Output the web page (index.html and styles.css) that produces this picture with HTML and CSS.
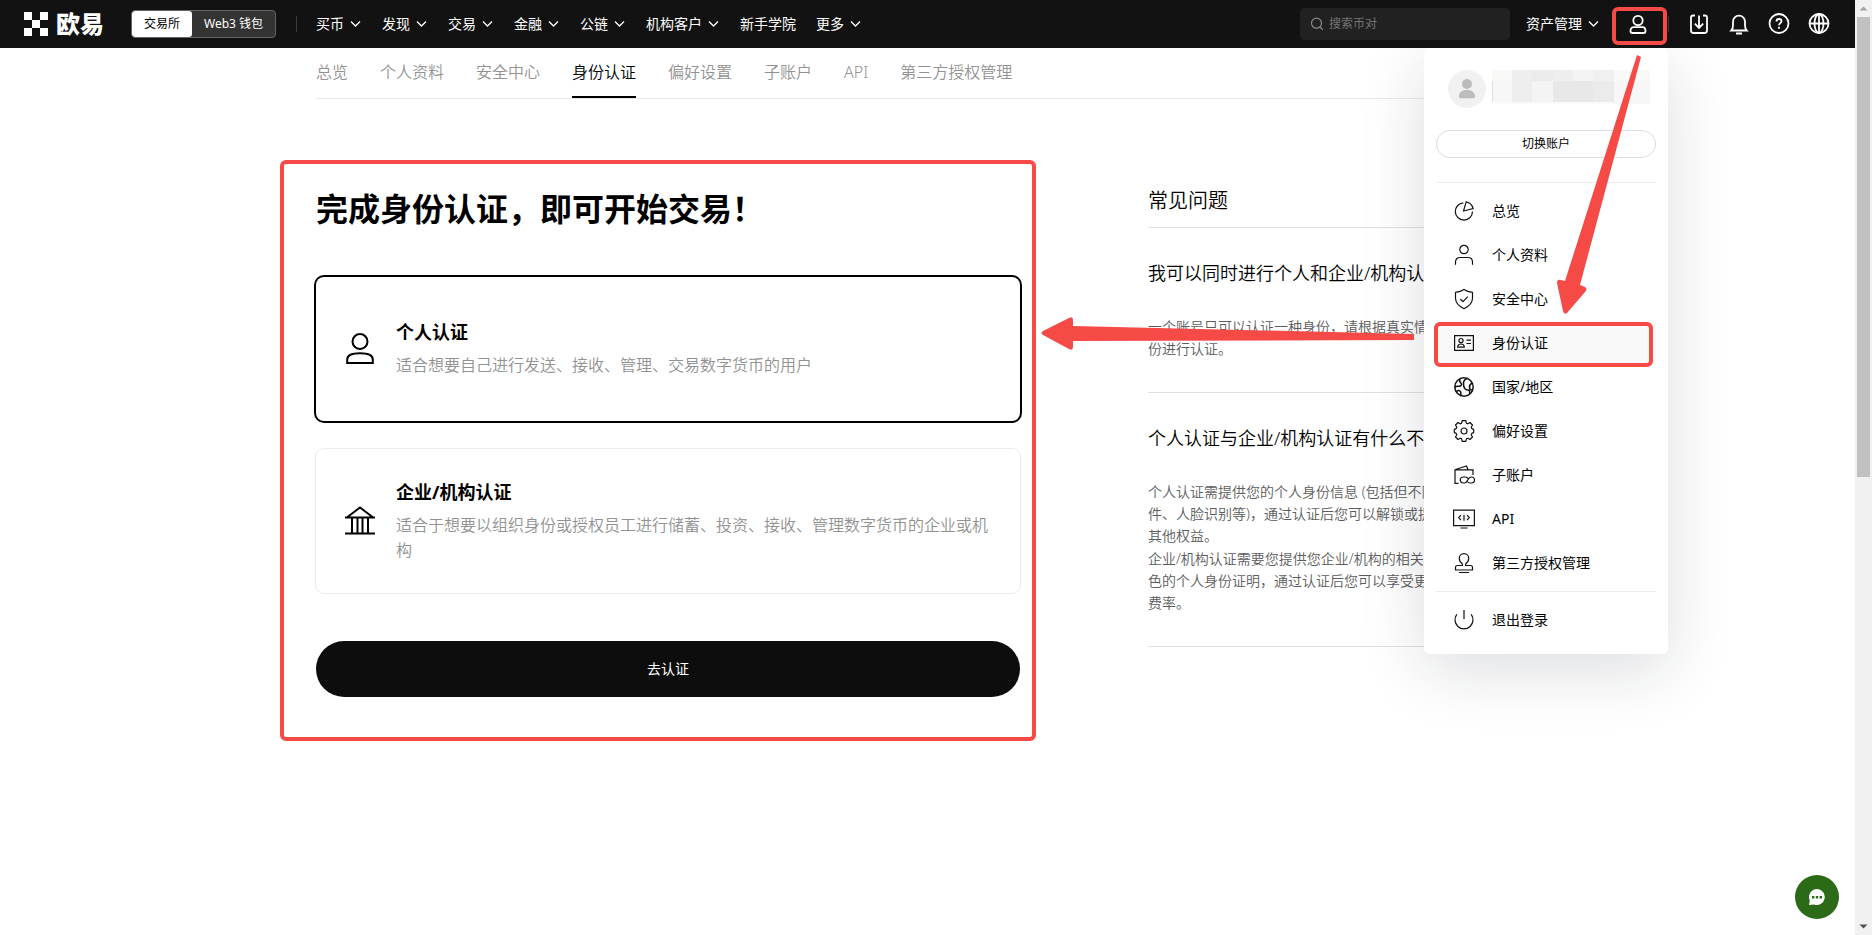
FILE: index.html
```html
<!DOCTYPE html>
<html lang="zh-CN">
<head>
<meta charset="utf-8">
<title>身份认证</title>
<link rel="stylesheet" href="styles.css">
</head>
<body>
<svg class="defs" aria-hidden="true">
  <symbol id="chev" viewBox="0 0 12 12"><path d="M1 3.500 5.500 8 10 3.500" fill="none" stroke="currentColor" stroke-width="1.300"/></symbol>
</svg>
<header class="topbar">
  <a class="logo" href="#">
    <svg class="logo-mark" viewBox="0 0 24 24" aria-hidden="true"><path fill="#fff" d="M0 0h8v8H0zM16 0h8v8h-8zM8 8h8v8H8zM0 16h8v8H0zM16 16h8v8h-8z"/></svg>
    <span class="logo-text">欧易</span>
  </a>
  <div class="switch">
    <button class="switch-item switch-on" type="button">交易所</button>
    <button class="switch-item" type="button">Web3 钱包</button>
  </div>
  <span class="bar-divider"></span>
  <nav class="mainnav">
    <a href="#">买币<svg class="chev"><use href="#chev"/></svg></a>
    <a href="#">发现<svg class="chev"><use href="#chev"/></svg></a>
    <a href="#">交易<svg class="chev"><use href="#chev"/></svg></a>
    <a href="#">金融<svg class="chev"><use href="#chev"/></svg></a>
    <a href="#">公链<svg class="chev"><use href="#chev"/></svg></a>
    <a href="#">机构客户<svg class="chev"><use href="#chev"/></svg></a>
    <a href="#">新手学院</a>
    <a href="#">更多<svg class="chev"><use href="#chev"/></svg></a>
  </nav>
  <label class="search">
    <svg class="search-icon" viewBox="0 0 14 14" aria-hidden="true"><circle cx="6.500" cy="6.200" r="5" /><path d="m10.200 10 2.500 2.800"/></svg>
    <input type="text" placeholder="搜索币对" aria-label="搜索币对">
  </label>
  <nav class="mainnav assets"><a href="#">资产管理<svg class="chev"><use href="#chev"/></svg></a></nav>
  <div class="account">
    <button class="icon-btn marked" type="button" aria-label="账户">
      <svg viewBox="0 0 24 24"><circle cx="12" cy="8.500" r="4.700"/><path d="M7.500 15.200h9c2 0 3 1.800 3 3.800 0 1.200-.6 2-1.800 2H6.300c-1.200 0-1.800-.8-1.800-2 0-2 1-3.800 3-3.800z"/></svg>
    </button>
    <aside class="menu">
      <div class="profile">
        <svg class="avatar" viewBox="0 0 38 38" aria-hidden="true"><circle cx="19" cy="19" r="19" fill="#f1f1f1"/><circle cx="19" cy="14" r="5" fill="#bcbcbc"/><path d="M11 26.500c0-4 3-6.500 8-6.500s8 2.500 8 6.500c0 1.200-.6 1.700-1.800 1.700H12.800c-1.200 0-1.800-.5-1.800-1.700z" fill="#bcbcbc"/></svg>
        <svg class="mosaic" viewBox="0 0 158 34" aria-hidden="true">
          <path fill="#f9f9f8" d="M0 0h20v11H0zM122 0h36v11h-36z"/><path fill="#eeeeee" d="M20 0h20v32H20zM61 0h20v11H61z"/><path fill="#ebebeb" d="M40 0h21v11H40z"/><path fill="#f4f4f4" d="M81 0h20v11H81zM40 11h21v21H40z"/><path fill="#f0f0f0" d="M101 0h21v11h-21z"/><path fill="#f7f7f7" d="M0 11h20v21H0zM122 11h36v23h-36z"/><path fill="#e8e8e8" d="M61 11h40v21H61z"/><path fill="#ebebeb" d="M101 11h21v21h-21z"/><path fill="#fafafa" d="M0 32h122v2H0z"/><path fill="#ddd" d="M0 11h1v21H0z"/>
        </svg>
      </div>
      <button class="swap" type="button">切换账户</button>
      <ul class="menu-list">
        <li><a href="#"><svg viewBox="0 0 20 20"><path d="M9.300 1.900A8.600 8.600 0 1 0 18.500 10.500"/><path d="M12.200.8 9.500 10l9.600-2.500A9 9 0 0 0 12.200.8z"/></svg>总览</a></li>
        <li><a href="#"><svg viewBox="0 0 20 20"><circle cx="10" cy="4.500" r="4.200"/><path d="M1.500 19.800v-2.500c0-3 1.700-4.800 4.500-4.800h8c2.800 0 4.500 1.800 4.500 4.800v2.500"/></svg>个人资料</a></li>
        <li><a href="#"><svg viewBox="0 0 20 20"><path d="M10 .5c2.800 2 5.500 2.500 8.500 2.800v6c0 4.500-3.500 8-8.500 10.400-5-2.400-8.500-5.900-8.500-10.400v-6C4.500 3 7.200 2.500 10 .5z"/><path d="m6.300 10 2.700 2.600 4.800-5"/></svg>安全中心</a></li>
        <li><a class="current marked" href="#"><svg viewBox="0 0 20 20"><path d="M.6 2.600h18.800v14.800H.6z"/><circle cx="7" cy="7.600" r="2.100"/><path d="M3.700 14.200c0-2 1-3.200 3.300-3.200s3.300 1.200 3.300 3.200zM12.500 7.200h4.500M12.500 10.500h4.500"/></svg>身份认证</a></li>
        <li><a href="#"><svg viewBox="0 0 20 20" class="bold"><circle cx="10" cy="10" r="9.200"/><path d="M5.800 2c-.5 2 .2 3.500 1.500 4.500 1 1-.5 2.600-2 2.800-1.500.2-2.900-.2-4.500.7M2 14.800c2.500-1.800 4.600-1.500 4.800.6.100 1-.3 2.300.5 3.600M13.500 1.500c-2.700.7-3.800 2.300-4 4.500-.2 2.400.2 4.500 1.700 6 1.500 1.500 3.300.4 4.100 1.500.6 1 .2 2.500.5 3.500M18.300 6c-2 1-3 2.500-2.800 4.500 0 1.500 1.200 2.500 2.700 2.900"/></svg>国家/地区</a></li>
        <li><a href="#"><svg viewBox="0 0 20 20"><circle cx="10" cy="10" r="3"/><path d="M8.200.7h3.600l.6 2.500 1.400.6 2.200-1.300 2.500 2.500-1.300 2.200.6 1.400 1.900.8v3.200l-1.900.8-.6 1.400 1.300 2.200-2.500 2.500-2.200-1.300-1.400.6-.6 2.500H8.200l-.6-2.500-1.400-.6L4 19.500 1.500 17l1.300-2.200-.6-1.400-1.900-.8V9.400l1.900-.8.600-1.400L1.500 5 4 2.500l2.200 1.300 1.400-.6z" transform="translate(0 -1)" stroke-linejoin="round"/></svg>偏好设置</a></li>
        <li><a href="#"><svg viewBox="0 0 20 20"><path d="M4.500 18.300H1V4.800h18V10M1.500 4.500l11-3.500 1.500 3.500"/><path d="M14.500 14c-.8-1.300-1.800-2-3.500-2H9.500c-1.900 0-3.200 1.300-3.200 3s1.300 3 3.200 3h1c3.300 0 3.200-6 6.500-6h.3c1.900 0 3.200 1.300 3.200 3s-1.300 3-3.200 3H16c-1.200 0-2.200-.5-3-1.500"/></svg>子账户</a></li>
        <li><a href="#"><svg viewBox="0 0 20 20"><path d="M-.4 1.200h20.800v15.400H-.4zM6.500 19h7M7 6.200 4.700 8.600 7 11M13 6.200l2.300 2.400L13 11M10 5.800v6"/></svg>API</a></li>
        <li><a href="#"><svg viewBox="0 0 20 20"><path d="M8.300 10.800C6 9.300 5.300 7.300 5.300 5.300a4.700 4.700 0 0 1 9.400 0c0 2-.7 4-3 5.500v1.700h4.800c1.300 0 2 .7 2 2V17h-17v-2.500c0-1.300.7-2 2-2h4.800zM5 19.500h10"/></svg>第三方授权管理</a></li>
      </ul>
      <ul class="menu-list">
        <li><a href="#"><svg viewBox="0 0 20 20"><path d="M10 0v9M2.800 4.400a9 9 0 1 0 14.400 0"/></svg>退出登录</a></li>
      </ul>
      <svg class="arrows" viewBox="1424 48 244 606" aria-hidden="true">
        <path d="M1414 334v6L1073 341v6q0 4-4 2l-26-14q-3-2 0-4l26-13q4-2 4 2v6z"/>
        <path d="M1637 55l4 2-61 228 5 2q3 2 0 5l-18 21q-3 2-4-2l-6-28q0-4 4-3l4 1z"/>
      </svg>
    </aside>
  </div>
  <span class="bar-divider tools-divider"></span>
  <div class="tools">
    <button class="icon-btn" type="button" aria-label="下载"><svg viewBox="0 0 24 24"><path d="M8 3.500H6.200C4.600 3.500 4 4 4 5.500v13C4 20.300 4.700 21 6.500 21h11c1.800 0 2.500-.7 2.500-2.500v-13c0-1.500-.6-2-2.200-2H16M12 3.500V16M7.800 11.700 12 16l4.200-4.300"/></svg></button>
    <button class="icon-btn" type="button" aria-label="通知"><svg viewBox="0 0 24 24"><path d="M4.200 18.500C5.500 17 6 15.500 6 13.500V9.700a6 6 0 0 1 12 0v3.800c0 2 .5 3.500 1.800 5zM9 21.500h6"/></svg></button>
    <button class="icon-btn" type="button" aria-label="帮助"><svg viewBox="0 0 24 24"><circle cx="12" cy="11.500" r="9.500"/><path d="M9.500 9.500C9.500 8 10.500 7 12 7s2.500 1 2.500 2.300c0 1.800-2.500 2-2.500 4M12 14.800v2"/></svg></button>
    <button class="icon-btn" type="button" aria-label="语言"><svg viewBox="0 0 24 24"><circle cx="12" cy="11.500" r="9.500"/><ellipse cx="12" cy="11.500" rx="4.500" ry="9.500"/><path d="M2.500 11.500h19M12 2v19"/></svg></button>
  </div>
</header>

<main class="page">
  <nav class="tabs">
    <a href="#">总览</a><a href="#">个人资料</a><a href="#">安全中心</a><a class="active" href="#">身份认证</a><a href="#">偏好设置</a><a href="#">子账户</a><a href="#">API</a><a href="#">第三方授权管理</a>
  </nav>
  <div class="columns">
    <section class="verify marked">
      <h1>完成身份认证，即可开始交易！</h1>
      <div class="cards">
        <button class="card selected" type="button">
          <svg class="card-icon" viewBox="0 0 32 32" aria-hidden="true"><circle cx="16" cy="8.500" r="7.500"/><path d="M3.200 30V26.500c0-4 4-6.300 12.800-6.300s12.800 2.300 12.800 6.300V30z"/></svg>
          <span class="card-body"><strong>个人认证</strong><span>适合想要自己进行发送、接收、管理、交易数字货币的用户</span></span>
        </button>
        <button class="card" type="button">
          <svg class="card-icon" viewBox="0 0 32 32" aria-hidden="true"><path d="M3.500 12 16 2.500 28.500 12M1 12.500h30M1 28.500h30M8 12.500v16M13.500 12.500v16M18.500 12.500v16M24 12.500v16"/></svg>
          <span class="card-body"><strong>企业/机构认证</strong><span>适合于想要以组织身份或授权员工进行储蓄、投资、接收、管理数字货币的企业或机构</span></span>
        </button>
      </div>
      <button class="go" type="button">去认证</button>
    </section>
    <section class="faq">
      <h2>常见问题</h2>
      <article>
        <h3>我可以同时进行个人和企业/机构认证吗？</h3>
        <p>一个账号只可以认证一种身份，请根据真实情况选择身<br>份进行认证。</p>
      </article>
      <article>
        <h3>个人认证与企业/机构认证有什么不同？</h3>
        <p>个人认证需提供您的个人身份信息 (包括但不限于证<br>件、人脸识别等)，通过认证后您可以解锁或提高限额<br>其他权益。</p>
        <p>企业/机构认证需要您提供您企业/机构的相关信息与角<br>色的个人身份证明，通过认证后您可以享受更优惠的<br>费率。</p>
      </article>
    </section>
  </div>
</main>

<button class="chat" type="button" aria-label="在线客服"><svg viewBox="0 0 18 18"><path fill="#fff" d="M9 1a8 8 0 1 1-3 15.500L1 17l.8-4.500A8 8 0 0 1 9 1z"/><path fill="#2b6a17" d="M4 8h2.400v2.400H4zM7.800 8h2.400v2.400H7.800zM11.600 8H14v2.400h-2.400z"/></svg></button>
<div class="scrollbar" aria-hidden="true">
  <svg viewBox="0 0 17 17"><path d="M4.500 10.500 8.500 6.500l4 4z" fill="#a3a3a3"/></svg>
  <div class="track"><div class="thumb"></div></div>
  <svg viewBox="0 0 17 17"><path d="M4.500 6.500l4 4 4-4z" fill="#505050"/></svg>
</div>
</body>
</html>
```
FILE: styles.css
```css
* { box-sizing: border-box; }
body {
  min-height: 100vh;
  margin: 0;
  padding-right: 17px;
  background: #fff;
  color: #000;
  font: 14px/20px "Noto Sans", "Noto Sans CJK SC", sans-serif;
}
a { color: inherit; text-decoration: none; }
button { border: 0; padding: 0; background: none; font: inherit; color: inherit; }
h1, h2, h3, p, ul { margin: 0; padding: 0; }
ul { list-style: none; }
.defs { position: absolute; width: 0; height: 0; }

/* Top bar */
.topbar {
  position: relative;
  z-index: 2;
  display: flex;
  align-items: center;
  height: 48px;
  padding: 0 24px;
  background: #121212;
  color: #fff;
  white-space: nowrap;
}
.logo { display: flex; align-items: center; gap: 8px; width: 107px; }
.logo-mark { width: 24px; height: 24px; }
.logo-text { font-size: 24px; line-height: 24px; font-weight: 900; }
.switch {
  display: flex;
  height: 28px;
  border: 1px solid #666;
  border-radius: 4px;
  background: #333;
  overflow: hidden;
}
.switch-item { padding: 0 12px; font-size: 12px; }
.switch-on { background: #fff; color: #000; border-radius: 3px; }
.bar-divider { width: 1px; height: 16px; background: #3c3c3c; margin: 0 19px 0 20px; }
.mainnav { display: flex; gap: 20px; }
.mainnav a { display: flex; align-items: center; gap: 6px; }
.chev { width: 12px; height: 12px; }
.search {
  display: flex;
  align-items: center;
  gap: 5px;
  width: 210px;
  height: 32px;
  margin-left: auto;
  padding: 0 10px;
  background: #212121;
  border-radius: 4px;
}
.search-icon { width: 14px; height: 14px; fill: none; stroke: #8c8c8c; stroke-width: 1.2; }
.search input {
  flex: 1;
  min-width: 0;
  border: 0;
  padding: 0;
  background: none;
  color: #fff;
  font: inherit;
  font-size: 12px;
}
.search input::placeholder { color: #757575; }
.assets { margin: 0 12px 0 16px; }
.account {
  position: relative;
  display: flex;
  align-items: center;
  width: 56px;
  height: 48px;
  padding-left: 14px;
}
.icon-btn { position: relative; width: 24px; height: 24px; }
.icon-btn svg { display: block; width: 24px; height: 24px; fill: none; stroke: #fff; stroke-width: 1.8; }
.tools-divider { margin: 0 18px 0 0; }
.tools { display: flex; gap: 16px; }

/* Red highlight frames */
.marked::after {
  content: "";
  position: absolute;
  border: 4px solid #f64a47;
  border-radius: 6px;
  pointer-events: none;
}
.icon-btn.marked::after { inset: -5px -17px -9px -14px; }
.menu .marked::after { inset: 1px 3px -2px -2px; }
.verify.marked::after { inset: -29px -16px -44px -36px; }

/* Account menu */
.menu {
  position: absolute;
  top: 48px;
  right: 0;
  width: 244px;
  padding: 22px 12px 6px;
  background: #fff;
  color: #000;
  border-radius: 6px;
  box-shadow: 0 16px 64px rgba(20, 25, 50, 0.15);
  clip-path: inset(0 -500px -200px -500px);
}
.profile { display: flex; gap: 6px; padding-left: 12px; }
.avatar { width: 38px; height: 38px; }
.mosaic { width: 158px; height: 34px; }
.swap {
  width: 100%;
  height: 28px;
  margin: 22px 0 24px;
  border: 1px solid #dcdcdc;
  border-radius: 14px;
  font-size: 12px;
}
.menu-list { padding: 6px 0; border-top: 1px solid #ebecf2; }
.menu-list a {
  position: relative;
  display: flex;
  align-items: center;
  gap: 18px;
  height: 44px;
  padding-left: 18px;
}
.menu-list svg { width: 20px; height: 20px; overflow: visible; fill: none; stroke: #111; stroke-width: 1.2; }
.menu-list svg.bold { stroke-width: 1.5; }
.menu-list .current { background: #f9f9f9; }
.arrows {
  position: absolute;
  top: 0;
  left: 0;
  width: 100%;
  height: 606px;
  overflow: visible;
  fill: #f64a47;
  pointer-events: none;
}

/* Page */
.page { max-width: 1223px; margin: 0 auto; padding-bottom: 44px; font-weight: 350; }
.tabs {
  display: flex;
  gap: 32px;
  height: 51px;
  border-bottom: 1px solid #ebebeb;
  color: #929292;
  font-size: 16px;
  line-height: 48px;
}
.tabs .active { color: #000; border-bottom: 2px solid #000; }
.columns { display: flex; gap: 128px; padding-top: 90px; }
.verify { position: relative; flex: 0 1 704px; }
.verify h1 { font-size: 32px; line-height: 40px; font-weight: 700; }
.cards { display: flex; flex-direction: column; gap: 28px; margin: 48px 0; }
.card {
  display: flex;
  align-items: center;
  gap: 20px;
  height: 144px;
  padding: 0 28px;
  border-radius: 8px;
  box-shadow: 0 0 0 1px #ebebeb;
  text-align: left;
}
.card.selected { box-shadow: 0 0 0 2px #000; }
.card-icon { flex: none; width: 32px; height: 32px; fill: none; stroke: #000; stroke-width: 2; }
.card-body {
  display: flex;
  flex-direction: column;
  gap: 8px;
  color: #929292;
  font-size: 16px;
  line-height: 25px;
}
.card-body strong { color: #000; font-size: 18px; font-weight: 700; }
.go {
  width: 100%;
  height: 56px;
  border-radius: 28px;
  background: #0d0d0d;
  color: #fff;
  font-weight: 400;
}
.faq { flex: 1; min-width: 0; white-space: nowrap; }
.faq h2 {
  padding-bottom: 14px;
  border-bottom: 1px solid #e0e0e0;
  font-size: 20px;
  line-height: 24px;
  font-weight: inherit;
}
.faq article { padding: 32px 0; border-bottom: 1px solid #e0e0e0; }
.faq h3 { margin-bottom: 30px; font-size: 18px; line-height: 26px; font-weight: inherit; }
.faq p { color: #5c5c5c; line-height: 22px; }
.faq p + p { margin-top: 1px; }

/* Floating chat and scrollbar */
.chat {
  position: fixed;
  right: 33px;
  bottom: 16px;
  display: flex;
  align-items: center;
  justify-content: center;
  width: 44px;
  height: 44px;
  border-radius: 50%;
  background: #2b6a17;
}
.chat svg { width: 18px; height: 18px; }
.scrollbar {
  position: fixed;
  top: 0;
  right: 0;
  bottom: 0;
  z-index: 3;
  display: flex;
  flex-direction: column;
  width: 17px;
  background: #f1f1f1;
}
.scrollbar svg { width: 17px; height: 17px; }
.track { flex: 1; padding: 0 2px; }
.thumb { height: 51%; background: #c1c1c1; }
```
